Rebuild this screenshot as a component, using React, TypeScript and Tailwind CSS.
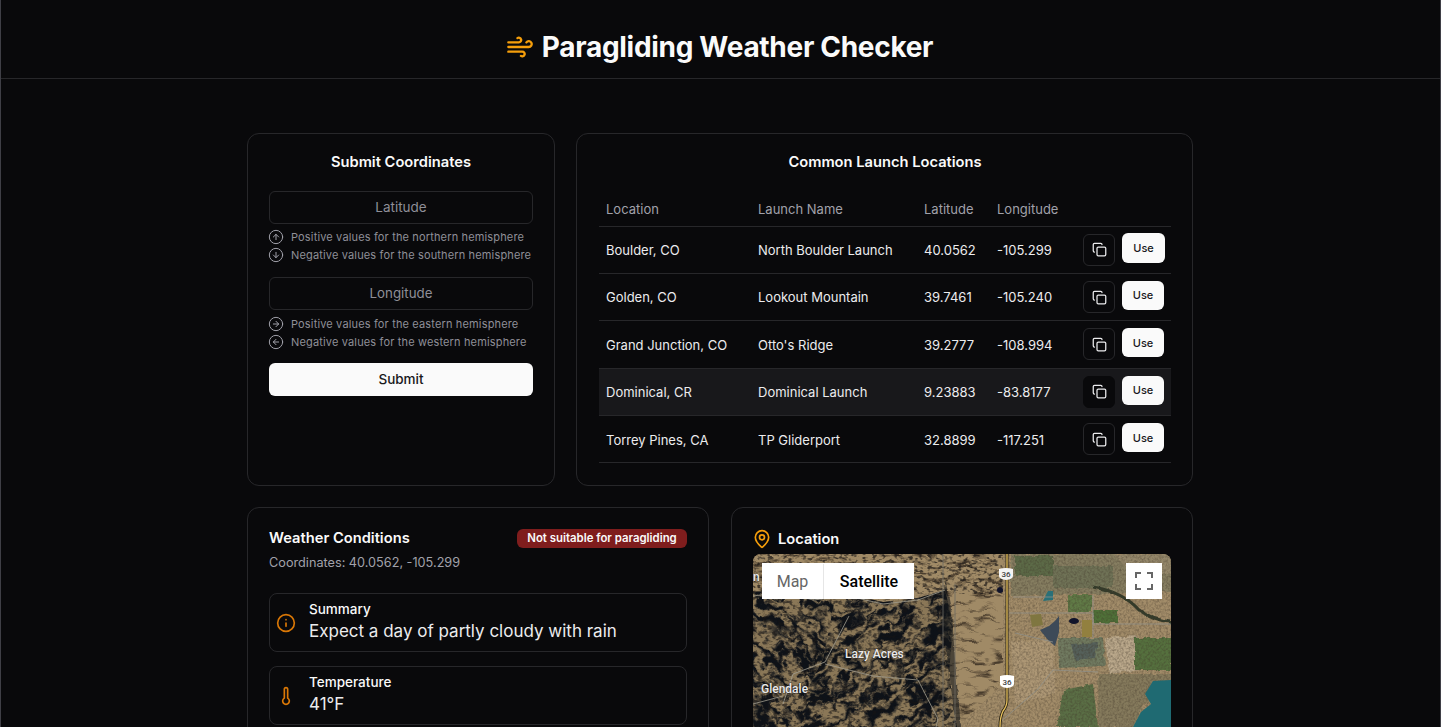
import { ArrowDownCircle, ArrowLeftCircle, ArrowRightCircle, ArrowUpCircle, Copy, Info, MapPin, Thermometer, Wind } from "lucide-react";

const locations = [
  { location: "Boulder, CO", name: "North Boulder Launch", lat: "40.0562", lng: "-105.299" },
  { location: "Golden, CO", name: "Lookout Mountain", lat: "39.7461", lng: "-105.240" },
  { location: "Grand Junction, CO", name: "Otto's Ridge", lat: "39.2777", lng: "-108.994" },
  { location: "Dominical, CR", name: "Dominical Launch", lat: "9.23883", lng: "-83.8177" },
  { location: "Torrey Pines, CA", name: "TP Gliderport", lat: "32.8899", lng: "-117.251" },
];

const Hint = ({ dir, text }: { dir: "up" | "down" | "left" | "right"; text: string }) => {
  const Arrow = { up: ArrowUpCircle, down: ArrowDownCircle, left: ArrowLeftCircle, right: ArrowRightCircle }[dir];
  return (
    <div className="flex items-center h-[18px] text-[11px] tracking-[0.15px] text-[#8f8f98]">
      <Arrow size={16} strokeWidth={1.5} className="-ml-[1px] mr-[7px] text-[#a1a1aa]" />
      {text}
    </div>
  );
};

const SatelliteMap = () => (
  <svg className="absolute inset-0 w-full h-full" viewBox="0 0 418 173">
    <defs>
      <filter id="rough" x="-5%" y="-5%" width="110%" height="110%" colorInterpolationFilters="sRGB">
        <feTurbulence type="fractalNoise" baseFrequency="0.14" numOctaves="3" seed="4" />
        <feDisplacementMap in="SourceGraphic" scale="4" />
        <feGaussianBlur stdDeviation="0.5" />
      </filter>
      <filter id="ridgeLong" x="0" y="0" width="100%" height="100%" colorInterpolationFilters="sRGB">
        <feTurbulence type="fractalNoise" baseFrequency="0.045 0.13" numOctaves="4" seed="12" result="streak" />
        <feTurbulence type="fractalNoise" baseFrequency="0.06" numOctaves="3" seed="3" result="warp" />
        <feDisplacementMap in="streak" in2="warp" scale="30" xChannelSelector="R" yChannelSelector="G" />
        <feColorMatrix values="0 0 0 0 0.055  0 0 0 0 0.07  0 0 0 0 0.095  5.5 0 0 0 -2.35" />
        <feGaussianBlur stdDeviation="0.45" />
      </filter>
      <filter id="ridgeFine" x="0" y="0" width="100%" height="100%" colorInterpolationFilters="sRGB">
        <feTurbulence type="fractalNoise" baseFrequency="0.2 0.32" numOctaves="2" seed="31" />
        <feColorMatrix values="0 0 0 0 0.09  0 0 0 0 0.08  0 0 0 0 0.08  5 0 0 0 -2.5" />
        <feGaussianBlur stdDeviation="0.35" />
      </filter>
      <filter id="streaks" x="0" y="0" width="100%" height="100%" colorInterpolationFilters="sRGB">
        <feTurbulence type="fractalNoise" baseFrequency="0.05 0.2" numOctaves="3" seed="7" result="s" />
        <feTurbulence type="fractalNoise" baseFrequency="0.05" numOctaves="2" seed="21" result="w" />
        <feDisplacementMap in="s" in2="w" scale="14" xChannelSelector="R" yChannelSelector="G" />
        <feColorMatrix values="0 0 0 0 0.2  0 0 0 0 0.16  0 0 0 0 0.12  4 0 0 0 -2.1" />
        <feGaussianBlur stdDeviation="0.4" />
      </filter>
      <filter id="grain" x="0" y="0" width="100%" height="100%" colorInterpolationFilters="sRGB">
        <feTurbulence type="fractalNoise" baseFrequency="0.45" numOctaves="2" seed="9" />
        <feColorMatrix values="0 0 0 0 0.25  0 0 0 0 0.21  0 0 0 0 0.16  0.9 0 0 0 -0.34" />
        <feGaussianBlur stdDeviation="0.4" />
      </filter>
      <clipPath id="mountains">
        <path d="M0 38 L30 36 L60 44 L95 40 L130 48 L165 44 L192 36 L200 70 L196 120 L204 173 L0 173 Z" />
      </clipPath>
      <clipPath id="mtnWest">
        <path d="M0 30 H85 L70 105 L35 173 H0 Z" />
      </clipPath>
      <clipPath id="mtnEast">
        <path d="M85 30 H205 V173 H35 L70 105 Z" />
      </clipPath>
      <clipPath id="foothills">
        <path d="M0 0 H250 V130 L204 173 L196 120 L200 70 L192 36 L130 48 L60 44 L0 38 Z" />
      </clipPath>
    </defs>

    <rect width="418" height="173" fill="#a28c69" />

    {/* east side: plains and fields */}
    <g filter="url(#rough)">
      <path d="M258 0 H420 V38 L340 40 L258 42 Z" fill="#857d60" />
      <path d="M262 2 H300 V22 H262 Z" fill="#5c6a47" />
      <path d="M300 12 H360 V34 H300 Z" fill="#6f7256" />
      <path d="M360 0 H420 V20 H380 Z" fill="#94876a" />
      <path d="M258 88 L300 85 L303 140 L262 150 Z" fill="#ad9775" />
      <path d="M352 84 L384 82 L388 116 L356 120 Z" fill="#b9a78a" />
      <path d="M310 136 L340 130 L345 173 H304 Z" fill="#5a6e45" />
      <path d="M345 120 H418 V134 L392 150 L380 173 H346 Z" fill="#857a5c" />
      <path d="M315 41 H339 V58 H315 Z" fill="#607a46" />
      <path d="M341 56 H365 V69 H341 Z" fill="#4f7038" />
      <path d="M382 84 H418 V116 H382 Z" fill="#55703e" />
      <path d="M305 84 L350 84 L352 112 L306 114 Z" fill="#707a60" />
      <path d="M318 90 L345 88 L342 104 L322 106 Z" fill="#55605a" />
      <path d="M340 33 Q370 38 386 56 Q400 66 418 68" fill="none" stroke="#333b2a" strokeWidth="3" />
    </g>
    <rect width="418" height="173" filter="url(#grain)" />

    {/* foothills and upper band */}
    <g clipPath="url(#foothills)">
      <rect width="250" height="173" fill="#a08a66" />
      <rect width="250" height="173" filter="url(#streaks)" opacity="0.8" />
      <rect y="0" width="250" height="40" filter="url(#ridgeFine)" opacity="0.7" />
    </g>

    {/* mountains: ridges fall away both sides of the drainage */}
    <g clipPath="url(#mountains)">
      <rect width="205" height="173" fill="#8a7757" />
      <g clipPath="url(#mtnWest)">
        <rect x="-200" y="-200" width="600" height="600" transform="rotate(38 50 100)" filter="url(#ridgeLong)" />
      </g>
      <g clipPath="url(#mtnEast)">
        <rect x="-200" y="-200" width="600" height="600" transform="rotate(-32 130 100)" filter="url(#ridgeLong)" />
      </g>
      <rect width="205" height="173" filter="url(#ridgeFine)" opacity="0.6" />
    </g>
    <path d="M192 24 L199 60 L203 120 L208 173 L203 173 L195 110 L189 60 Z" fill="#15181c" opacity="0.6" filter="url(#rough)" />

    {/* water and ponds */}
    <path d="M329 66 H339 V83 H329 Z" fill="#92803f" />
    <path d="M277 61 L288 60 L290 71 L279 73 Z" fill="#7f7640" />
    <path d="M295 37 L300 37 L300 46 L290 47 Z" fill="#2a7078" />
    <path d="M302 67 L306 62 L306 78 L302 92 L295 86 L287 76 L296 72 Z" fill="#3d4a58" />
    <ellipse cx="321" cy="67" rx="5" ry="3" fill="#10132a" />
    <ellipse cx="247" cy="36" rx="3" ry="3" fill="#10132a" />
    <path d="M418 126 L400 127 L392 140 L398 150 L388 158 L380 173 H418 Z" fill="#1f6a72" />

    {/* roads */}
    <g fill="none" stroke="#8f8f88" strokeWidth="0.8">
      <path d="M256 59 H340 V70 H418" />
      <path d="M340 41 V84" />
      <path d="M260 43 H300" />
      <path d="M262 79 L300 88" />
      <path d="M300 116 L345 118" />
      <path d="M245 170 L285 135 L300 116" />
      <path d="M0 42 L30 38 L60 46 L95 42 L130 50 L165 46 L192 36" stroke="#a09c8e" />
      <path d="M96 62 L72 108 L40 120 L30 150" stroke="#a09c8e" />
      <path d="M72 110 L120 122 L165 126 L185 165 L183 173" stroke="#a09c8e" />
      <path d="M0 150 L30 142" stroke="#a09c8e" />
      <path d="M190 0 V173" stroke="#6d6a62" />
      <path d="M202 30 V173" stroke="#6d6a62" />
    </g>

    {/* highway */}
    <path d="M254 0 V146 Q254 152 250 157 Q247 163 247 173" fill="none" stroke="#2b2516" strokeWidth="3" />
    <path d="M254 0 V146 Q254 152 250 157 Q247 163 247 173" fill="none" stroke="#e7c05d" strokeWidth="1.3" />

    {/* shields */}
    <g fontFamily="Roboto, sans-serif" fill="#3c3c3c" fontSize="8" fontWeight="500" textAnchor="middle">
      <path d="M246 15 Q253 13 260 15 L260 22 Q260 25 253 26 Q246 25 246 22 Z" fill="#f4f4f4" />
      <text x="253" y="23">36</text>
      <path d="M247 122 Q254 120 261 122 L261 130 Q261 133 254 134 Q247 133 247 130 Z" fill="#fff" />
      <text x="254" y="131">36</text>
    </g>

    {/* place labels */}
    <g fontFamily="Roboto, sans-serif" fill="#e9e9e9" fontSize="12" fontWeight="500" stroke="#1a1a1a" strokeOpacity="0.6" strokeWidth="1" paintOrder="stroke">
      <text x="92" y="103.5">Lazy Acres</text>
      <text x="8" y="139">Glendale</text>
      <text x="0" y="27">n</text>
    </g>
  </svg>
);

const App = () => {
  return (
    <div className="h-screen overflow-hidden border-x border-[#3f3f46] bg-[#09090b] text-[#fafafa] font-['Inter',sans-serif]">
      <header className="h-[79px] border-b border-[#27272a] flex items-center justify-center gap-[8px] pt-[16px] pr-[2px]">
        <Wind size={28} color="#f59e0b" strokeWidth={2} />
        <h1 className="text-[28px] font-bold tracking-[-0.3px] text-[#fafafa]">Paragliding Weather Checker</h1>
      </header>

      <main className="w-[946px] ml-[246px] pt-[54px] flex flex-col gap-[21px]">
        <div className="flex gap-[21px]">
          {/* Submit form */}
          <section className="w-[308px] h-[353px] rounded-xl border border-[#27272a] px-[21px] pt-[18px]">
            <h2 className="text-center text-[14.7px] leading-[20px] font-semibold">Submit Coordinates</h2>
            <div className="mt-[19px] h-[33px] rounded-md border border-[#27272a] flex items-center justify-center text-[13.5px] text-[#8f8f98]">
              Latitude
            </div>
            <div className="mt-[4px]">
              <Hint dir="up" text="Positive values for the northern hemisphere" />
              <Hint dir="down" text="Negative values for the southern hemisphere" />
            </div>
            <div className="mt-[13px] h-[33px] rounded-md border border-[#27272a] flex items-center justify-center text-[13.3px] text-[#8f8f98]">
              Longitude
            </div>
            <div className="mt-[5px]">
              <Hint dir="right" text="Positive values for the eastern hemisphere" />
              <Hint dir="left" text="Negative values for the western hemisphere" />
            </div>
            <button className="mt-[12px] w-full h-[33px] rounded-md bg-[#fafafa] text-[#18181b] text-[13.5px] font-medium">Submit</button>
          </section>

          {/* Launch table */}
          <section className="w-[617px] h-[353px] rounded-xl border border-[#27272a] pl-[22px] pr-[21px] pt-[18px]">
            <h2 className="text-center text-[14.7px] leading-[20px] font-semibold">Common Launch Locations</h2>
            <table className="mt-[18px] w-[572px] table-fixed text-[13px] border-collapse">
              <colgroup>
                <col className="w-[152px]" />
                <col className="w-[166px]" />
                <col className="w-[73px]" />
                <col className="w-[86px]" />
                <col />
              </colgroup>
              <thead>
                <tr className="h-[36px] border-b border-[#27272a] text-[#a1a1aa]">
                  <th className="pl-[7px] pt-[3px] text-left font-normal">Location</th>
                  <th className="pl-[7px] pt-[3px] text-left font-normal">Launch Name</th>
                  <th className="pl-[7px] pt-[3px] text-left font-normal">Latitude</th>
                  <th className="pl-[7px] pt-[3px] text-left font-normal">Longitude</th>
                  <th />
                </tr>
              </thead>
              <tbody className="text-[#ececee]">
                {locations.map((loc, i) => (
                  <tr key={loc.name} className={`h-[47.4px] border-b border-[#27272a] ${i === 3 ? "bg-[#18181b]" : ""}`}>
                    <td className="pl-[7px] pt-[2px]">{loc.location}</td>
                    <td className="pl-[7px] pt-[2px]">{loc.name}</td>
                    <td className="pl-[7px] pt-[2px]">{loc.lat}</td>
                    <td className="pl-[7px] pt-[2px]">{loc.lng}</td>
                    <td className="pl-[7px]">
                      <div className="flex items-center gap-[7px]">
                        <span className={`w-[32px] h-[32px] flex items-center justify-center rounded-md border ${i === 3 ? "bg-[#09090b] border-[#09090b]" : "border-[#27272a]"}`}>
                          <Copy size={15} />
                        </span>
                        <button className={`rounded-md bg-[#fafafa] text-[#18181b] text-[11px] font-medium ${i === 0 ? "w-[43px] h-[30px]" : "w-[42px] h-[29px]"} -mt-[3px]`}>
                          Use
                        </button>
                      </div>
                    </td>
                  </tr>
                ))}
              </tbody>
            </table>
          </section>
        </div>

        <div className="flex gap-[22px]">
          {/* Weather */}
          <section className="w-[462px] rounded-xl border border-[#27272a] px-[21px] pt-[20px]">
            <div className="flex items-center justify-between h-[21px]">
              <h2 className="text-[14.7px] font-semibold">Weather Conditions</h2>
              <span className="h-[19px] w-[170px] flex items-center justify-center rounded-md bg-[#7f1d1d] text-[11.4px] font-semibold">Not suitable for paragliding</span>
            </div>
            <p className="mt-[4px] text-[12.7px] leading-[20px] text-[#a1a1aa]">Coordinates: 40.0562, -105.299</p>
            <div className="mt-[20px] h-[59px] rounded-lg border border-[#27272a] flex items-center pl-[6px] gap-[13px]">
              <Info size={20} color="#d97706" />
              <div>
                <div className="text-[13.5px] font-medium leading-[15px]">Summary</div>
                <div className="mt-px text-[17px] leading-[26px] text-[#ececee]">Expect a day of partly cloudy with rain</div>
              </div>
            </div>
            <div className="mt-[14px] h-[59px] rounded-lg border border-[#27272a] flex items-center pl-[6px] gap-[13px]">
              <Thermometer size={20} color="#d97706" />
              <div>
                <div className="text-[13.5px] font-medium leading-[15px]">Temperature</div>
                <div className="mt-px text-[17px] leading-[26px] text-[#ececee]">41°F</div>
              </div>
            </div>
          </section>

          {/* Map */}
          <section className="w-[462px] rounded-xl border border-[#27272a] p-[21px]">
            <div className="flex items-center gap-[6px] h-[20px] -ml-[1px]">
              <MapPin size={20} color="#f59e0b" />
              <h2 className="text-[14.7px] font-semibold">Location</h2>
            </div>
            <div className="relative mt-[5px] h-[400px] rounded-lg overflow-hidden">
              <div className="absolute left-0 top-0 w-[418px] h-[173px]">
                <SatelliteMap />
              </div>
              <div className="absolute left-[9px] top-[9px] h-[36px] flex bg-white font-['Roboto',sans-serif] text-[16px] pt-px">
                <span className="w-[62px] flex items-center justify-center text-[#666666] border-r border-[#e6e6e6]">Map</span>
                <span className="w-[90px] flex items-center justify-center text-[#000000] font-medium">Satellite</span>
              </div>
              <div className="absolute right-[9px] top-[9px] w-[36px] h-[36px] bg-white flex items-center justify-center">
                <svg width="18" height="18" viewBox="0 0 18 18" fill="none" stroke="#666666" strokeWidth="2">
                  <path d="M1 6V1H6M12 1H17V6M17 12V17H12M6 17H1V12" />
                </svg>
              </div>
            </div>
          </section>
        </div>
      </main>
    </div>
  );
};

export default App;
